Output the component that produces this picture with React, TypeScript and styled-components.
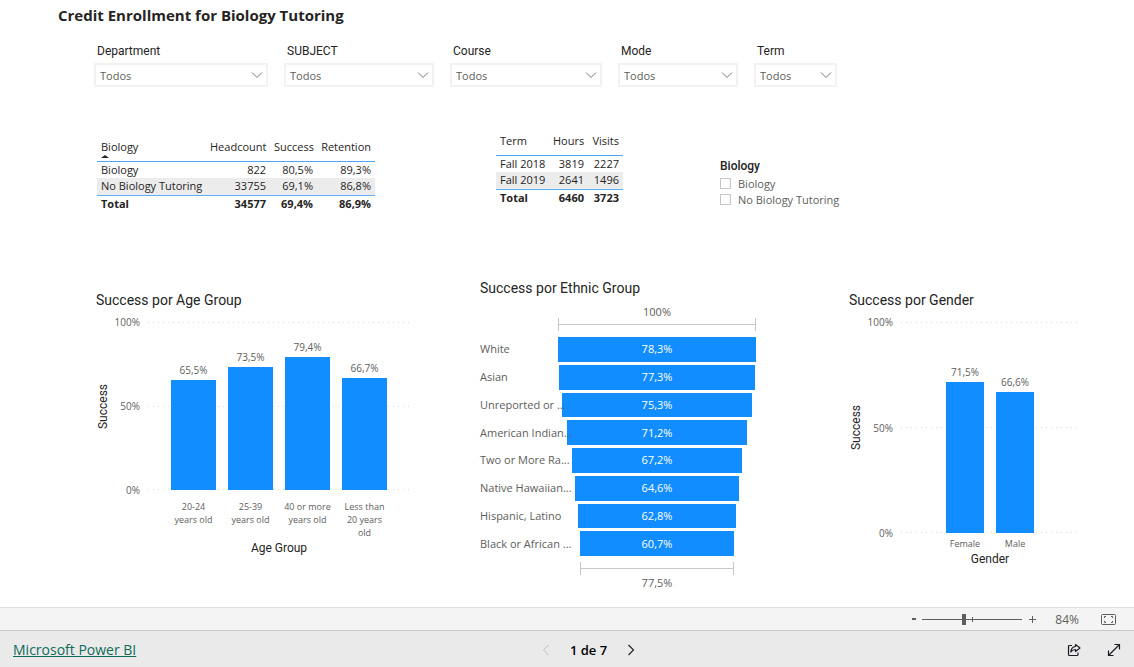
import React from 'react';
import styled, { createGlobalStyle } from 'styled-components';

const sans = '"Open Sans", "Noto Sans", sans-serif';
const display = 'Roboto, "Liberation Sans", sans-serif';
const blue = '#118dff';

const GlobalStyle = createGlobalStyle`
  *, *::before, *::after { box-sizing: border-box; }
  body { margin: 0; background: #fff; color: #252423; font-family: ${sans}; font-size: 11px; }
  h1, h2, p { margin: 0; }
  button, select, input { font: inherit; color: inherit; }
`;

const Page = styled.div`
  min-height: 100vh;
  display: flex;
  flex-direction: column;
`;

const Report = styled.main`
  flex: 1;
  display: flex;
  flex-direction: column;
`;

const Title = styled.h1`
  padding: 3px 0 0 58px;
  font-size: 15px;
  font-weight: 700;
  line-height: 24px;
`;

const Filters = styled.form`
  display: grid;
  grid-template-columns: 174fr 150fr 152fr 120fr 83fr;
  column-gap: 16px;
  padding: 16px 297px 0 94px;
`;

const Filter = styled.div`
  display: flex;
  flex-direction: column;
  gap: 4px;
`;

const FilterLabel = styled.label`
  padding-left: 3px;
  font-family: ${display};
  font-size: 12px;
  line-height: 16px;
`;

const SelectBox = styled.div`
  position: relative;
  display: flex;
  color: #605e5c;

  svg {
    position: absolute;
    right: 5px;
    top: 8px;
    pointer-events: none;
  }
`;

const Select = styled.select`
  appearance: none;
  width: 100%;
  height: 24px;
  padding: 0 20px 0 4px;
  border: 2px solid #f3f2f1;
  border-radius: 0;
  background: #fff;
`;

const Summary = styled.section`
  display: flex;
  align-items: flex-start;
  padding: 40px 0 0 97px;
`;

const TableSlot = styled.div<{ $gap: number; $drop?: boolean }>`
  flex: none;
  padding-top: ${(p) => (p.$drop ? 6 : 0)}px;
  margin-right: ${(p) => p.$gap}px;
`;

const Table = styled.table`
  table-layout: fixed;
  border-collapse: collapse;
  line-height: 16px;

  th, td {
    height: 17px;
    padding: 0 4px;
    text-align: right;
    font-weight: 400;
    white-space: nowrap;
  }
  th:first-child { text-align: left; }
  thead th {
    height: 28px;
    padding-top: 6px;
    vertical-align: top;
    border-bottom: 1px solid #4aa5ff;
  }
  tbody tr:nth-child(even) { background: #ececec; }
  tfoot th, tfoot td {
    border-top: 1px solid #5cb1ff;
    font-weight: 700;
  }
`;

const SortMark = styled.span`
  display: block;
  width: 0;
  border: 4px solid transparent;
  border-top-width: 0;
  border-bottom: 3px solid #252423;
`;

const Slicer = styled.fieldset`
  margin: 0;
  padding: 30px 0 0;
  border: 0;
`;

const SlicerTitle = styled.legend`
  float: left;
  padding: 0;
  font-family: ${display};
  font-size: 12px;
  font-weight: 500;
  line-height: 18px;
`;

const Option = styled.label`
  clear: both;
  display: flex;
  align-items: center;
  gap: 7px;
  height: 16px;
  color: #605e5c;
`;

const Check = styled.input`
  appearance: none;
  width: 11px;
  height: 11px;
  margin: 0;
  border: 1px solid #c8c6c4;
  background: #fff;

  &:checked { background: ${blue}; }
`;

const Charts = styled.section`
  display: grid;
  grid-template-columns: 316fr 301fr 232fr;
  column-gap: 68px;
  align-items: start;
  padding: 67px 53px 8px 96px;
`;

const Chart = styled.article<{ $drop?: boolean }>`
  min-width: 0;
  padding-top: ${(p) => (p.$drop ? 12 : 0)}px;
`;

const ChartTitle = styled.h2`
  font-family: ${display};
  font-size: 14px;
  font-weight: 400;
  line-height: 18px;
  white-space: nowrap;
`;

const ColumnGrid = styled.div`
  display: grid;
  grid-template-columns: 14px 30px 1fr;
  column-gap: 4px;
  padding: 13px 2px 0 0;
`;

const AxisName = styled.p<{ $vertical?: boolean }>`
  font-family: ${display};
  font-size: 12px;
  line-height: 14px;
  text-align: center;
  ${(p) => p.$vertical && 'writing-mode: vertical-rl; transform: rotate(180deg);'}
`;

const Ticks = styled.div`
  display: flex;
  flex-direction: column;
  justify-content: space-between;
  margin: -6px 0;
  padding-right: 4px;
  font-size: 10px;
  line-height: 12px;
  text-align: right;
  color: #605e5c;
`;

const dots = 'repeating-linear-gradient(90deg, #dcdcdc 0 1px, transparent 1px 5px)';

const Plot = styled.div<{ $height: number; $inset: number }>`
  display: flex;
  align-items: flex-end;
  height: ${(p) => p.$height}px;
  padding: 0 ${(p) => p.$inset}px;
  background: ${dots} top / 100% 1px no-repeat, ${dots} center / 100% 1px no-repeat,
    ${dots} bottom / 100% 1px no-repeat;
`;

const Column = styled.div`
  flex: 1;
  height: 100%;
  display: flex;
  flex-direction: column;
  justify-content: flex-end;
  padding: 0 6px;
`;

const ColumnValue = styled.span`
  align-self: center;
  padding-bottom: 4px;
  font-size: 10px;
  line-height: 12px;
  color: #605e5c;
`;

const ColumnBar = styled.div`
  flex: none;
  background: ${blue};
`;

const Categories = styled.div<{ $inset: number; $top: number }>`
  grid-column: 3;
  display: flex;
  padding: ${(p) => p.$top}px ${(p) => p.$inset}px 0;
  font-size: 9px;
  line-height: 13px;
  text-align: center;
  white-space: pre-line;
  color: #605e5c;

  span { flex: 1; padding: 0 2px; }
`;

const AxisFoot = styled.div`
  grid-column: 3;
  padding-top: 2px;
`;

const Funnel = styled.div`
  padding: 8px 25px 0 0;
  color: #605e5c;
`;

const FunnelRows = styled.div`
  display: flex;
  flex-direction: column;
  gap: 3px;
  height: 219px;
  margin: 6px 0;
`;

const FunnelRow = styled.div`
  flex: 1;
  display: grid;
  grid-template-columns: 78px 1fr;
  align-items: center;
  line-height: 16px;
  white-space: nowrap;
`;

const FunnelLabel = styled.span`
  min-width: 0;
  z-index: 1;
`;

const FunnelBar = styled.div`
  height: 100%;
  display: flex;
  align-items: center;
  justify-content: center;
  justify-self: center;
  background: ${blue};
  color: #fff;
`;

const FunnelScale = styled.div`
  margin-left: 78px;
  display: flex;
  flex-direction: column;
  align-items: center;
`;

const ScaleValue = styled.span<{ $below?: boolean }>`
  line-height: ${(p) => (p.$below ? 16 : 13)}px;
`;

const Bracket = styled.div`
  height: 13px;
  border: solid #c8c6c4;
  border-width: 0 1px;
  background: linear-gradient(#c8c6c4, #c8c6c4) center / 100% 1px no-repeat;
`;

const ZoomBar = styled.div`
  display: flex;
  align-items: center;
  justify-content: flex-end;
  height: 23px;
  padding-right: 18px;
  border-top: 1px solid #dedede;
  background: #f4f4f4;
  color: #605e5c;
`;

const IconButton = styled.button`
  display: flex;
  align-items: center;
  justify-content: center;
  width: 16px;
  height: 20px;
  padding: 0;
  border: 0;
  background: none;

  &:disabled { color: #bdbdbd; }
`;

const Range = styled.input`
  appearance: none;
  width: 100px;
  height: 13px;
  margin: 0 2px 0 0;
  background: linear-gradient(#605e5c, #605e5c) 50px center / 1px 5px no-repeat,
    linear-gradient(#605e5c, #605e5c) center / 100% 1px no-repeat;

  &::-webkit-slider-thumb {
    appearance: none;
    width: 4px;
    height: 11px;
    background: #605e5c;
  }
`;

const ZoomValue = styled.output`
  width: 39px;
  margin-right: 21px;
  text-align: right;
  font-size: 12px;
`;

const Footer = styled.footer`
  display: grid;
  grid-template-columns: 1fr auto 1fr;
  align-items: center;
  height: 37px;
  padding: 2px 12px 0 13px;
  border-top: 1px solid #c8c8c8;
  background: #eaeaea;
`;

const BrandLink = styled.a`
  justify-self: start;
  color: #0f6a5b;
  font-size: 14px;
  line-height: 20px;
`;

const Pager = styled.nav`
  display: flex;
  align-items: center;
  gap: 16px;
  padding-left: 42px;
  color: #252423;
`;

const PageCount = styled.span`
  color: #000;
  font-size: 13px;
  font-weight: 600;
`;

const Actions = styled.div`
  display: flex;
  justify-self: end;
  gap: 24px;
  color: #1f1a24;
`;

const filters = ['Department', 'SUBJECT', 'Course', 'Mode', 'Term'];

type Datum = { name: string; value: number };

const ages: Datum[] = [
  { name: '20-24\nyears old', value: 65.5 },
  { name: '25-39\nyears old', value: 73.5 },
  { name: '40 or more\nyears old', value: 79.4 },
  { name: 'Less than\n20 years\nold', value: 66.7 },
];

const genders: Datum[] = [
  { name: 'Female', value: 71.5 },
  { name: 'Male', value: 66.6 },
];

const ethnic: Datum[] = [
  { name: 'White', value: 78.3 },
  { name: 'Asian', value: 77.3 },
  { name: 'Unreported or ...', value: 75.3 },
  { name: 'American Indian...', value: 71.2 },
  { name: 'Two or More Ra...', value: 67.2 },
  { name: 'Native Hawaiian...', value: 64.6 },
  { name: 'Hispanic, Latino', value: 62.8 },
  { name: 'Black or African ...', value: 60.7 },
];

const percent = (n: number) => `${n.toFixed(1).replace('.', ',')}%`;

type DataTableProps = {
  widths: number[];
  head: string[];
  rows: string[][];
  total: string[];
  sorted?: boolean;
};

function DataTable({ widths, head, rows, total, sorted }: DataTableProps) {
  return (
    <Table style={{ width: widths.reduce((a, b) => a + b, 0) }}>
      <colgroup>
        {widths.map((w, i) => <col key={i} style={{ width: w }} />)}
      </colgroup>
      <thead>
        <tr>
          {head.map((h, i) => (
            <th key={h} scope="col">{h}{sorted && i === 0 && <SortMark />}</th>
          ))}
        </tr>
      </thead>
      <tbody>
        {rows.map(([name, ...cells]) => (
          <tr key={name}>
            <th scope="row">{name}</th>
            {cells.map((c) => <td key={c}>{c}</td>)}
          </tr>
        ))}
      </tbody>
      <tfoot>
        <tr>
          <th scope="row">{total[0]}</th>
          {total.slice(1).map((c) => <td key={c}>{c}</td>)}
        </tr>
      </tfoot>
    </Table>
  );
}

type ColumnChartProps = {
  title: string;
  axis: string;
  data: Datum[];
  height: number;
  inset: number;
  labelTop: number;
};

function ColumnChart({ title, axis, data, height, inset, labelTop }: ColumnChartProps) {
  return (
    <Chart $drop>
      <ChartTitle>{title}</ChartTitle>
      <ColumnGrid>
        <AxisName $vertical>Success</AxisName>
        <Ticks><span>100%</span><span>50%</span><span>0%</span></Ticks>
        <Plot $height={height} $inset={inset}>
          {data.map((d) => (
            <Column key={d.name}>
              <ColumnValue>{percent(d.value)}</ColumnValue>
              <ColumnBar style={{ height: `${d.value}%` }} />
            </Column>
          ))}
        </Plot>
        <Categories $inset={inset} $top={labelTop}>
          {data.map((d) => <span key={d.name}>{d.name}</span>)}
        </Categories>
        <AxisFoot><AxisName>{axis}</AxisName></AxisFoot>
      </ColumnGrid>
    </Chart>
  );
}

function Chevron() {
  return (
    <svg width="12" height="8" viewBox="0 0 12 8" fill="none" stroke="#7a7876" aria-hidden="true">
      <path d="M1 1.5 6 6.5 11 1.5" />
    </svg>
  );
}

export default function App() {
  return (
    <>
      <GlobalStyle />
      <Page>
        <Report>
          <Title>Credit Enrollment for Biology Tutoring</Title>
          <Filters>
            {filters.map((name) => (
              <Filter key={name}>
                <FilterLabel htmlFor={`filter-${name}`}>{name}</FilterLabel>
                <SelectBox>
                  <Select id={`filter-${name}`}><option>Todos</option></Select>
                  <Chevron />
                </SelectBox>
              </Filter>
            ))}
          </Filters>

          <Summary>
            <TableSlot $gap={121} $drop>
              <DataTable
                sorted
                widths={[109, 64, 47, 58]}
                head={['Biology', 'Headcount', 'Success', 'Retention']}
                rows={[
                  ['Biology', '822', '80,5%', '89,3%'],
                  ['No Biology Tutoring', '33755', '69,1%', '86,8%'],
                ]}
                total={['Total', '34577', '69,4%', '86,9%']}
              />
            </TableSlot>
            <TableSlot $gap={97}>
              <DataTable
                widths={[53, 39, 35]}
                head={['Term', 'Hours', 'Visits']}
                rows={[
                  ['Fall 2018', '3819', '2227'],
                  ['Fall 2019', '2641', '1496'],
                ]}
                total={['Total', '6460', '3723']}
              />
            </TableSlot>
            <Slicer>
              <SlicerTitle>Biology</SlicerTitle>
              <Option><Check type="checkbox" />Biology</Option>
              <Option><Check type="checkbox" />No Biology Tutoring</Option>
            </Slicer>
          </Summary>

          <Charts>
            <ColumnChart title="Success por Age Group" axis="Age Group" data={ages} height={168} inset={17} labelTop={10} />
            <Chart>
              <ChartTitle>Success por Ethnic Group</ChartTitle>
              <Funnel>
                <FunnelScale>
                  <ScaleValue>100%</ScaleValue>
                  <Bracket style={{ width: '100%' }} />
                </FunnelScale>
                <FunnelRows>
                  {ethnic.map((d) => (
                    <FunnelRow key={d.name}>
                      <FunnelLabel>{d.name}</FunnelLabel>
                      <FunnelBar style={{ width: `${(d.value / 78.3) * 100}%` }}>{percent(d.value)}</FunnelBar>
                    </FunnelRow>
                  ))}
                </FunnelRows>
                <FunnelScale>
                  <Bracket style={{ width: '77.5%' }} />
                  <ScaleValue $below>77,5%</ScaleValue>
                </FunnelScale>
              </Funnel>
            </Chart>
            <ColumnChart title="Success por Gender" axis="Gender" data={genders} height={211} inset={39} labelTop={4} />
          </Charts>
        </Report>

        <ZoomBar>
          <IconButton type="button" aria-label="Zoom out">
            <svg width="6" height="12" viewBox="0 0 6 12" stroke="currentColor" strokeWidth="2"><path d="M1 6h4" /></svg>
          </IconButton>
          <Range type="range" min="0" max="200" defaultValue="84" aria-label="Zoom level" />
          <IconButton type="button" aria-label="Zoom in">
            <svg width="9" height="9" viewBox="0 0 9 9" stroke="currentColor"><path d="M1 4.5h7M4.5 1v7" /></svg>
          </IconButton>
          <ZoomValue>84%</ZoomValue>
          <IconButton type="button" aria-label="Fit to page">
            <svg width="15" height="11" viewBox="0 0 15 11" fill="none" stroke="currentColor">
              <rect x=".5" y=".5" width="14" height="10" rx="1" />
              <path d="M5 2.5H3.5V4M10 2.5h1.5V4M3.5 7v1.5H5M11.5 7v1.5H10" />
            </svg>
          </IconButton>
        </ZoomBar>

        <Footer>
          <BrandLink href="#">Microsoft Power BI</BrandLink>
          <Pager aria-label="Pages">
            <IconButton type="button" aria-label="Previous page" disabled>
              <svg width="8" height="12" viewBox="0 0 8 12" fill="none" stroke="currentColor"><path d="M6.5 1 1.5 6l5 5" /></svg>
            </IconButton>
            <PageCount>1 de 7</PageCount>
            <IconButton type="button" aria-label="Next page">
              <svg width="8" height="12" viewBox="0 0 8 12" fill="none" stroke="currentColor" strokeWidth="1.2"><path d="M1.5 1l5 5-5 5" /></svg>
            </IconButton>
          </Pager>
          <Actions>
            <IconButton type="button" aria-label="Share">
              <svg width="14" height="14" viewBox="0 0 14 14" fill="none" stroke="currentColor" strokeWidth="1.2" strokeLinejoin="round">
                <path d="M5 2.5H2.5a1 1 0 0 0-1 1V11.500a1 1 0 0 0 1 1H10a1 1 0 0 0 1-1V9.5" />
                <path d="M8.5 1.500 13 5l-4.500 3.500v-2C6.500 6.500 5 7.200 3.800 9c.2-3 2-5.200 4.700-5.500z" />
              </svg>
            </IconButton>
            <IconButton type="button" aria-label="Full screen">
              <svg width="14" height="14" viewBox="0 0 14 14" fill="none" stroke="currentColor" strokeWidth="1.2">
                <path d="M7.500 1.500h5v5M1.500 7.500v5h5M12.500 1.500l-11 11" />
              </svg>
            </IconButton>
          </Actions>
        </Footer>
      </Page>
    </>
  );
}
